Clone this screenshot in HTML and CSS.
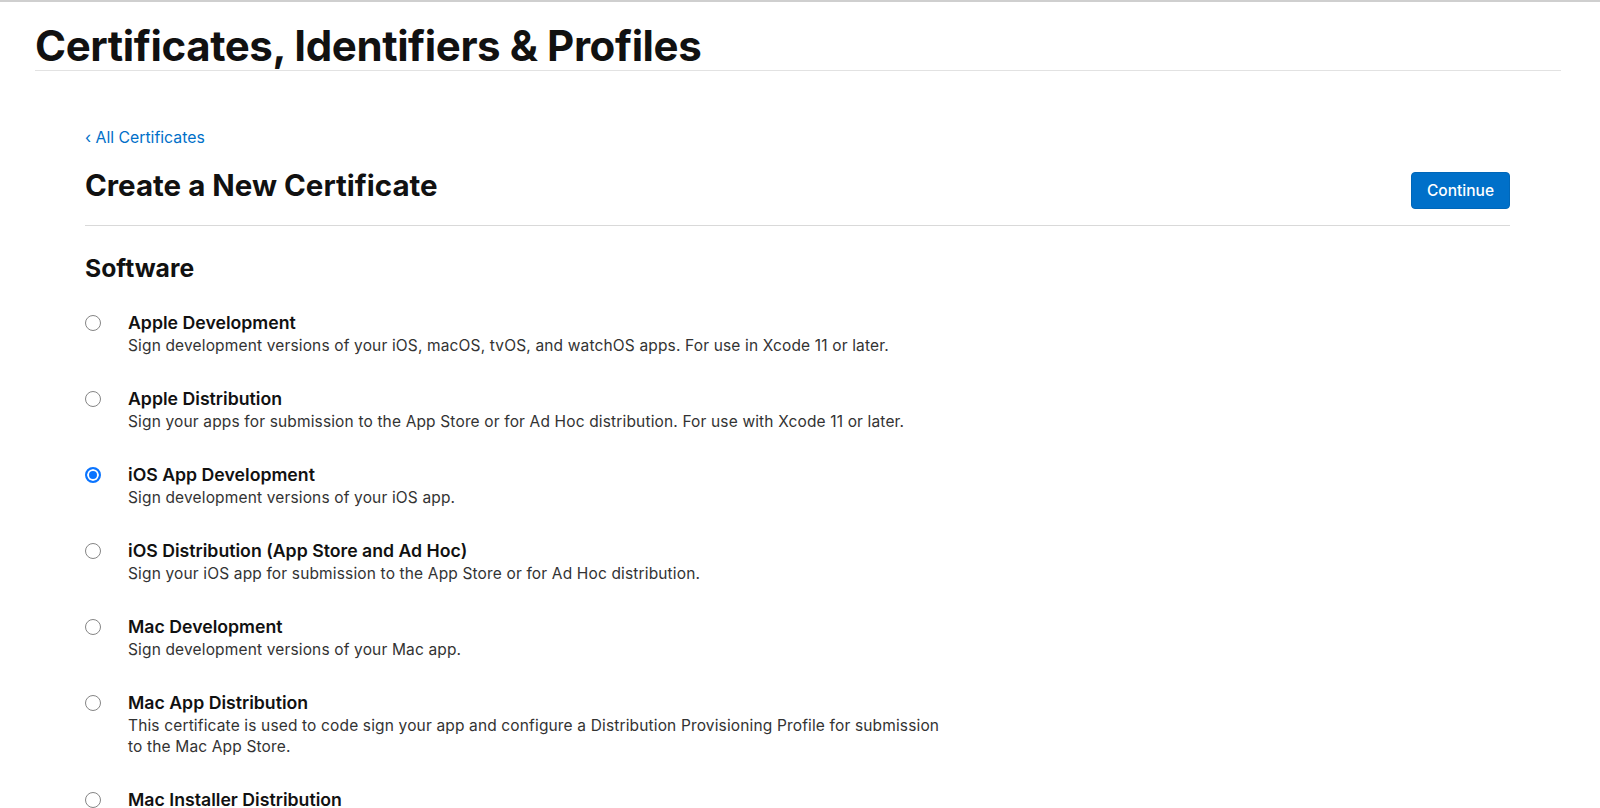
FILE: index.html
```html
<!DOCTYPE html>
<html lang="en">
<head>
<meta charset="utf-8">
<title>Certificates, Identifiers &amp; Profiles</title>
<link rel="stylesheet" href="styles.css">
</head>
<body>
<div class="topbar"></div>
<header class="page-header">
  <h1 class="page-title">Certificates, Identifiers &amp; Profiles</h1>
</header>
<main class="content">
  <a class="back-link" href="#">&lsaquo; All Certificates</a>
  <div class="heading-row">
    <h2 class="heading">Create a New Certificate</h2>
    <button class="btn-continue" type="button">Continue</button>
  </div>
  <h3 class="section-title">Software</h3>
  <ul class="options">
    <li class="option">
      <input class="radio" type="radio" name="cert" id="c1">
      <label class="option-text" for="c1">
        <span class="option-title">Apple Development</span>
        <span class="option-desc">Sign development versions of your iOS, macOS, tvOS, and watchOS apps. For use in Xcode 11 or later.</span>
      </label>
    </li>
    <li class="option">
      <input class="radio" type="radio" name="cert" id="c2">
      <label class="option-text" for="c2">
        <span class="option-title">Apple Distribution</span>
        <span class="option-desc">Sign your apps for submission to the App Store or for Ad Hoc distribution. For use with Xcode 11 or later.</span>
      </label>
    </li>
    <li class="option">
      <input class="radio" type="radio" name="cert" id="c3" checked>
      <label class="option-text" for="c3">
        <span class="option-title">iOS App Development</span>
        <span class="option-desc">Sign development versions of your iOS app.</span>
      </label>
    </li>
    <li class="option">
      <input class="radio" type="radio" name="cert" id="c4">
      <label class="option-text" for="c4">
        <span class="option-title">iOS Distribution (App Store and Ad Hoc)</span>
        <span class="option-desc">Sign your iOS app for submission to the App Store or for Ad Hoc distribution.</span>
      </label>
    </li>
    <li class="option">
      <input class="radio" type="radio" name="cert" id="c5">
      <label class="option-text" for="c5">
        <span class="option-title">Mac Development</span>
        <span class="option-desc">Sign development versions of your Mac app.</span>
      </label>
    </li>
    <li class="option">
      <input class="radio" type="radio" name="cert" id="c6">
      <label class="option-text" for="c6">
        <span class="option-title">Mac App Distribution</span>
        <span class="option-desc">This certificate is used to code sign your app and configure a Distribution Provisioning Profile for submission to the Mac App Store.</span>
      </label>
    </li>
    <li class="option">
      <input class="radio" type="radio" name="cert" id="c7">
      <label class="option-text" for="c7">
        <span class="option-title">Mac Installer Distribution</span>
        <span class="option-desc">This certificate is used to sign your app's Installer Package for submission to the Mac App Store.</span>
      </label>
    </li>
  </ul>
</main>
</body>
</html>
```

FILE: styles.css
```css
* { box-sizing: border-box; }
html, body { margin: 0; padding: 0; background: #fff; }
body {
  font-family: Inter, "Noto Sans", "Liberation Sans", sans-serif;
  color: #111;
  overflow: hidden;
}
.topbar { height: 2px; background: #cfcfcf; }
.page-header {
  margin: 0 39px 0 35px;
  padding: 19px 0 0;
  border-bottom: 1px solid #e2e2e2;
}
.page-title {
  margin: 0;
  font-size: 42px;
  line-height: 49px;
  font-weight: 700;
  letter-spacing: -0.4px;
  color: #111;
}
.content {
  margin-left: 85px;
  width: 1425px;
  padding-top: 56px;
}
.back-link {
  display: inline-block;
  font-size: 15.8px;
  line-height: 20px;
  color: #0070c9;
  text-decoration: none;
}
.heading-row {
  display: flex;
  justify-content: space-between;
  align-items: baseline;
  margin-top: 19px;
  padding-bottom: 16px;
  border-bottom: 1px solid #d9d9d9;
}
.heading {
  margin: 0;
  font-size: 29.5px;
  line-height: 36px;
  font-weight: 700;
  color: #111;
}
.btn-continue {
  font-family: inherit;
  font-size: 15.5px;
  font-weight: 500;
  color: #fff;
  background: #0070c9;
  border: 1px solid #0067b9;
  border-radius: 4px;
  width: 99px;
  height: 37px;
  padding: 0;
}
.section-title {
  margin: 27px 0 0;
  font-size: 24.7px;
  line-height: 30px;
  font-weight: 700;
  color: #111;
}
.options {
  list-style: none;
  margin: 27px 0 0;
  padding: 0;
  display: flex;
  flex-direction: column;
  gap: 30px;
}
.option {
  display: flex;
  align-items: flex-start;
  gap: 27px;
}
.radio {
  appearance: none;
  -webkit-appearance: none;
  margin: 5px 0 0;
  width: 16px;
  height: 16px;
  flex: none;
  border: 1px solid #858585;
  border-radius: 50%;
  background: #fff;
}
.radio:checked {
  border: 2px solid #0a74ff;
  background: #0a74ff;
  box-shadow: inset 0 0 0 2px #fff;
}
.option-text {
  display: flex;
  flex-direction: column;
  max-width: 818px;
}
.option-title {
  font-size: 17.7px;
  line-height: 25px;
  font-weight: 600;
  color: #111;
}
.option-desc {
  font-size: 15.5px;
  line-height: 21px;
  letter-spacing: 0.15px;
  color: #333;
}
```
